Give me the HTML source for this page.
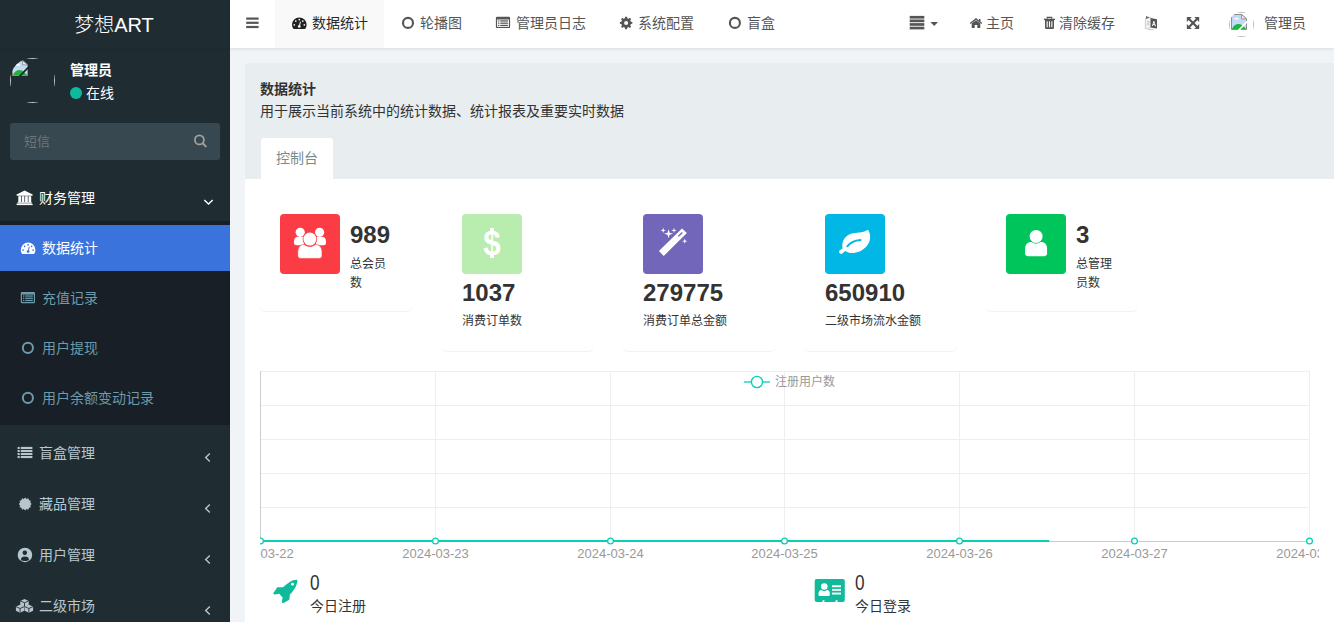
<!DOCTYPE html>
<html lang="zh-CN">
<head>
<meta charset="utf-8">
<title>梦想ART</title>
<style>
*{box-sizing:border-box;margin:0;padding:0}
html,body{width:1334px;height:622px;overflow:hidden}
body{font-family:"Liberation Sans","Noto Sans CJK SC",sans-serif;font-size:14px;color:#333;background:#f1f4f6;position:relative}
.abs{position:absolute;white-space:nowrap}
svg{display:block;position:absolute;overflow:visible;z-index:5;pointer-events:none}
/* ---------- sidebar ---------- */
#side{position:absolute;left:0;top:0;width:230px;height:622px;background:#1f2d33;overflow:hidden}
#logo{position:absolute;left:0;top:0;width:230px;height:50px;line-height:50px;padding-right:2px;text-align:center;color:#fff;font-size:20px;font-weight:300;border-bottom:1px solid #1c282d}
#avatar{position:absolute;left:10px;top:58px;width:45px;height:45px;border-radius:50%;overflow:hidden}
#avatar i,#navava i{position:absolute;left:0;top:0;right:0;bottom:0;border:1px solid #c4c4c4}
#navava{position:absolute;left:999px;top:12px;width:25px;height:25px;border-radius:50%;overflow:hidden}
#navava i{border-color:#bdbdbd}
#uname{left:70px;top:60px;color:#fff;font-weight:bold;font-size:14px;line-height:20px}
#ustat{left:86px;top:83px;color:#fff;font-size:14px;line-height:20px}
#udot{position:absolute;left:70px;top:87px;width:12px;height:12px;border-radius:50%;background:#0cbb9c}
#search{position:absolute;left:10px;top:123px;width:210px;height:37px;border-radius:3px;background:#374850}
#search span{position:absolute;left:14px;top:9px;font-size:13px;line-height:19px;color:#6b777c}
.m1{position:absolute;left:0;width:230px;height:51px;color:#b8c7ce;font-size:14px}
.m1 .t{position:absolute;left:39px;top:15px;line-height:20px}
.m1.open{color:#fff}
#tree{position:absolute;left:0;top:221px;width:230px;height:204px;background:#181f26}
.m2{position:absolute;left:0;width:230px;height:46px;color:#6c9bab;font-size:14px}
.m2 .t{position:absolute;left:42px;top:13px;line-height:20px}
.m2.act{background:#3b73dd;color:#fff}
/* ---------- header ---------- */
#nav{position:absolute;left:230px;top:0;width:1104px;height:48px;background:#fff;box-shadow:0 1px 3px rgba(0,0,0,.10)}
#tabact{position:absolute;left:45.4px;top:0;width:108.3px;height:48px;background:#f9f9f9}
.nt{top:13px;line-height:20px;font-size:14px;color:#555}
.nt.on{color:#2a2a2a}
/* ---------- content ---------- */
#panel{position:absolute;left:245px;top:63px;width:1100px;height:570px;background:#fff;border-radius:3px 0 0 0}
#phead{position:absolute;left:0;top:0;width:1100px;height:116px;background:#e8edf0;border-radius:3px 0 0 0}
#ptitle{left:15px;top:16px;font-weight:bold;font-size:14px;line-height:20px;color:#333}
#pdesc{left:15px;top:38px;font-size:14px;line-height:20px;color:#333}
#ptab{position:absolute;left:16px;top:75px;width:72px;height:41px;background:#fff;border-radius:3px 3px 0 0;color:#7b8a8b;font-size:14px;line-height:40px;text-align:center}
.card{position:absolute;width:150px;background:#fff;border-radius:5px;box-shadow:0 1px 0 rgba(0,0,0,.05)}
.ico{position:absolute;left:20px;top:20px;width:60px;height:60px;border-radius:4px}
.num{font-family:"Liberation Sans",sans-serif;font-weight:bold;font-size:24px;line-height:30px;color:#333}
.lab{font-size:12px;line-height:19px;color:#333}
#chart{overflow:hidden}
.bnum{font-size:21.5px;line-height:28px;color:#333;font-weight:300;transform:scaleX(.8);transform-origin:0 50%}
.blab{font-size:14px;line-height:20px;color:#333}
.usd{position:absolute;left:0;top:9.3px;width:60px;text-align:center;font-family:"Liberation Sans",sans-serif;font-weight:bold;font-size:34.7px;line-height:40px;color:#fff;transform:scaleX(.9);transform-origin:29.6px 50%}
.usdbox:before,.usdbox:after{content:"";position:absolute;left:27.7px;width:3.9px;height:4.2px;background:#fff}
.usdbox:before{top:14px}.usdbox:after{top:40.2px}
</style>
</head>
<body>

<!-- ================= SIDEBAR ================= -->
<div id="side">
<!-- icon layer: side -->
<svg width="230" height="622" viewBox="0 0 230 622" style="left:0;top:0">
<!-- search -->
<circle cx="199.4" cy="139.9" r="4.5" fill="none" stroke="#a3a19d" stroke-width="1.8"/><line x1="202.9" y1="143.4" x2="205.7" y2="146.4" stroke="#a3a19d" stroke-width="2" stroke-linecap="round"/>
<!-- bank -->
<g fill="#fff"><path d="M24.6,190.6 L32.6,194.4 V195.8 H16.6 V194.4Z"/>
<rect x="18.3" y="196.2" width="2.7" height="5.9"/><rect x="21.7" y="196.2" width="2.7" height="5.9"/><rect x="25.1" y="196.2" width="2.7" height="5.9"/><rect x="28.5" y="196.2" width="2.7" height="5.9"/>
<rect x="17.5" y="202.2" width="14.2" height="1.4"/><rect x="16.6" y="203.7" width="16" height="1.4"/></g>
<polyline points="204.3,200 208.5,204 212.7,200" fill="none" stroke="#fff" stroke-width="1.4"/>
<!-- level2 icons -->
<g transform="translate(0,0)">
<path fill="#fff" d="M20.8,249.9 A7.3,7.3 0 0 1 35.4,249.9 C35.4,251.4 35,252.7 34.3,253.7 Q34.05,254.1 33.6,254.1 L22.6,254.1 Q22.15,254.1 21.9,253.7 C21.2,252.7 20.8,251.4 20.8,249.9Z"/>
<g fill="#3b73dd"><circle cx="23.1" cy="250" r=".85"/><circle cx="24.6" cy="246.3" r=".85"/><circle cx="28.1" cy="244.8" r=".85"/><circle cx="31.6" cy="246.3" r=".85"/><circle cx="33.1" cy="250" r=".85"/><circle cx="28.1" cy="251.6" r="1.35"/></g>
<line x1="28.1" y1="251.6" x2="29.2" y2="247.2" stroke="#3b73dd" stroke-width="1" stroke-linecap="round"/></g>
<g transform="translate(0,0)">
<rect x="20.8" y="291.9" width="14.2" height="11.3" rx="1.2" fill="#6c9bab"/>
<rect x="22" y="294.6" width="11.8" height="7.4" fill="#181f26"/>
<g fill="#6c9bab"><rect x="25.2" y="295.4" width="7.6" height="1.25"/><rect x="25.2" y="297.65" width="7.6" height="1.25"/><rect x="25.2" y="299.9" width="7.6" height="1.25"/>
<rect x="23" y="295.4" width="1.3" height="1.25"/><rect x="23" y="297.65" width="1.3" height="1.25"/><rect x="23" y="299.9" width="1.3" height="1.25"/></g></g>
<circle cx="27.9" cy="347.9" r="5.05" fill="none" stroke="#6c9bab" stroke-width="2"/>
<circle cx="27.9" cy="397.9" r="5.05" fill="none" stroke="#6c9bab" stroke-width="2"/>
<!-- list -->
<g fill="#b8c7ce"><rect x="17.6" y="446.90" width="2.1" height="2.1"/><rect x="20.7" y="446.90" width="11.7" height="2.1"/><rect x="17.6" y="449.93" width="2.1" height="2.1"/><rect x="20.7" y="449.93" width="11.7" height="2.1"/><rect x="17.6" y="452.96" width="2.1" height="2.1"/><rect x="20.7" y="452.96" width="11.7" height="2.1"/><rect x="17.6" y="455.99" width="2.1" height="2.1"/><rect x="20.7" y="455.99" width="11.7" height="2.1"/></g>
<!-- certificate -->
<polygon points="25.20,497.50 26.57,498.88 28.45,498.37 28.95,500.25 30.83,500.75 30.32,502.63 31.70,504.00 30.32,505.37 30.83,507.25 28.95,507.75 28.45,509.63 26.57,509.12 25.20,510.50 23.83,509.12 21.95,509.63 21.45,507.75 19.57,507.25 20.08,505.37 18.70,504.00 20.08,502.63 19.57,500.75 21.45,500.25 21.95,498.37 23.83,498.88" fill="#b8c7ce"/>
<!-- user-circle -->
<circle cx="24.95" cy="554.9" r="7.25" fill="#b8c7ce"/>
<circle cx="24.8" cy="552.8" r="2.25" fill="#1f2d33"/>
<path d="M21,559.9 C21,557.5 22.5,556.6 24.9,556.6 C27.3,556.6 28.9,557.5 28.9,559.9 C27.8,560.7 26.4,561 24.9,561 C23.4,561 22,560.7 21,559.9Z" fill="#1f2d33"/>
<!-- cubes -->
<g transform="translate(24.5,602.9)"><polygon points="0,-3.9 4.2,-2 4.2,2.2 0,4.1 -4.2,2.2 -4.2,-2" fill="#b8c7ce"/><path d="M-4.2,-2 L0,-0.1 L4.2,-2 M0,-0.1 V4.1" fill="none" stroke="#1f2d33" stroke-width=".9"/></g><g transform="translate(20.1,608.6)"><polygon points="0,-3.9 4.2,-2 4.2,2.2 0,4.1 -4.2,2.2 -4.2,-2" fill="#b8c7ce"/><path d="M-4.2,-2 L0,-0.1 L4.2,-2 M0,-0.1 V4.1" fill="none" stroke="#1f2d33" stroke-width=".9"/></g><g transform="translate(28.9,608.6)"><polygon points="0,-3.9 4.2,-2 4.2,2.2 0,4.1 -4.2,2.2 -4.2,-2" fill="#b8c7ce"/><path d="M-4.2,-2 L0,-0.1 L4.2,-2 M0,-0.1 V4.1" fill="none" stroke="#1f2d33" stroke-width=".9"/></g>
<!-- chevrons -->
<polyline points="209.8,453.6 205.7,457.5 209.8,461.4" fill="none" stroke="#b8c7ce" stroke-width="1.4"/><polyline points="209.8,504.6 205.7,508.5 209.8,512.4" fill="none" stroke="#b8c7ce" stroke-width="1.4"/><polyline points="209.8,555.6 205.7,559.5 209.8,563.4" fill="none" stroke="#b8c7ce" stroke-width="1.4"/><polyline points="209.8,606.6 205.7,610.5 209.8,614.4" fill="none" stroke="#b8c7ce" stroke-width="1.4"/>
</svg>
  <div id="logo">梦想ART</div>
  <div id="avatar"><i></i><svg width="16" height="16" viewBox="0 0 16 16" style="left:2px;top:2px"><g transform="translate(0,0)">
<path d="M0.5,0.5 H10.6 L15.5,4.9 V15.5 H0.5Z" fill="#c6dbf6" stroke="#8c8c8c" stroke-width="1"/>
<path d="M1,1 H10 V6 H15 V9 H1Z" fill="#bfd6f5" opacity=".6"/>
<path d="M10.6,0.5 V4.9 H15.5Z" fill="#f4f4f4" stroke="#8c8c8c" stroke-width=".9" stroke-linejoin="round"/>
<path d="M2.9,5.4 C2.9,4.4 4,4.1 4.6,4.4 C5,3.2 6.9,3.2 7.3,4.4 C8,4.3 8.5,4.8 8.3,5.4Z" fill="#fff"/>
<path d="M1,15 C2.4,11.2 5,9.7 8,9.9 C10.8,10.1 13,12.4 15,15Z" fill="#1db53a"/>
<line x1="16.3" y1="7.4" x2="7.6" y2="16.3" stroke="#1b262b" stroke-width="1.7"/>
</g></svg></div>
  <div id="uname" class="abs">管理员</div>
  <div id="udot"></div>
  <div id="ustat" class="abs">在线</div>
  <div id="search"><span>短信</span></div>

  <div class="m1 open" style="top:173px"><span class="t">财务管理</span></div>
  <div id="tree">
    <div class="m2 act" style="top:4px"><span class="t">数据统计</span></div>
    <div class="m2" style="top:54px"><span class="t">充值记录</span></div>
    <div class="m2" style="top:104px"><span class="t">用户提现</span></div>
    <div class="m2" style="top:154px"><span class="t">用户余额变动记录</span></div>
  </div>
  <div class="m1" style="top:428px"><span class="t">盲盒管理</span></div>
  <div class="m1" style="top:479px"><span class="t">藏品管理</span></div>
  <div class="m1" style="top:530px"><span class="t">用户管理</span></div>
  <div class="m1" style="top:581px"><span class="t">二级市场</span></div>
</div>

<!-- ================= HEADER ================= -->
<div id="nav">
  <div id="tabact"></div>
<!-- icon layer: nav -->
<svg width="1104" height="48" viewBox="230 0 1104 48" style="left:0;top:0">
<g fill="#555"><rect x="246.2" y="17.5" width="12.4" height="2.2"/><rect x="246.2" y="21.7" width="12.4" height="2.2"/><rect x="246.2" y="25.9" width="12.4" height="2.2"/></g>
<g transform="translate(271.2,-225.2)">
<path fill="#222" d="M20.8,249.9 A7.3,7.3 0 0 1 35.4,249.9 C35.4,251.4 35,252.7 34.3,253.7 Q34.05,254.1 33.6,254.1 L22.6,254.1 Q22.15,254.1 21.9,253.7 C21.2,252.7 20.8,251.4 20.8,249.9Z"/>
<g fill="#f9f9f9"><circle cx="23.1" cy="250" r=".85"/><circle cx="24.6" cy="246.3" r=".85"/><circle cx="28.1" cy="244.8" r=".85"/><circle cx="31.6" cy="246.3" r=".85"/><circle cx="33.1" cy="250" r=".85"/><circle cx="28.1" cy="251.6" r="1.35"/></g>
<line x1="28.1" y1="251.6" x2="29.2" y2="247.2" stroke="#f9f9f9" stroke-width="1" stroke-linecap="round"/></g>
<circle cx="408" cy="22.9" r="5" fill="none" stroke="#555" stroke-width="2.1"/>
<g transform="translate(475.1,-275.1)">
<rect x="20.8" y="291.9" width="14.2" height="11.3" rx="1.2" fill="#555"/>
<rect x="22" y="294.6" width="11.8" height="7.4" fill="#fff"/>
<g fill="#555"><rect x="25.2" y="295.4" width="7.6" height="1.25"/><rect x="25.2" y="297.65" width="7.6" height="1.25"/><rect x="25.2" y="299.9" width="7.6" height="1.25"/>
<rect x="23" y="295.4" width="1.3" height="1.25"/><rect x="23" y="297.65" width="1.3" height="1.25"/><rect x="23" y="299.9" width="1.3" height="1.25"/></g></g>
<path fill="#555" fill-rule="evenodd" d="M624.96,18.14 L625.16,16.67 L627.04,16.67 L627.24,18.14 L628.66,18.72 L629.84,17.83 L631.17,19.16 L630.28,20.34 L630.86,21.76 L632.33,21.96 L632.33,23.84 L630.86,24.04 L630.28,25.46 L631.17,26.64 L629.84,27.97 L628.66,27.08 L627.24,27.66 L627.04,29.13 L625.16,29.13 L624.96,27.66 L623.54,27.08 L622.36,27.97 L621.03,26.64 L621.92,25.46 L621.34,24.04 L619.87,23.84 L619.87,21.96 L621.34,21.76 L621.92,20.34 L621.03,19.16 L622.36,17.83 L623.54,18.72Z M624.10,22.90 a2.00,2.00 0 1 0 4.00,0 a2.00,2.00 0 1 0 -4.00,0Z"/>
<circle cx="734.9" cy="22.9" r="5" fill="none" stroke="#555" stroke-width="2.1"/>
<g fill="#555"><rect x="909.7" y="15.9" width="14.6" height="2.7"/><rect x="909.7" y="19.5" width="14.6" height="2.7"/><rect x="909.7" y="23.1" width="14.6" height="2.7"/><rect x="909.7" y="26.7" width="14.6" height="2.7"/>
<polygon points="930.4,22 938,22 934.2,26"/></g>
<!-- home -->
<g fill="#555"><polygon points="971.7,23.6 976,20.3 980.3,23.6 980.3,28 977.3,28 977.3,25 974.7,25 974.7,28 971.7,28"/><rect x="979" y="19" width="1.5" height="2.8"/></g>
<polyline points="970.2,23.5 976,18.9 981.8,23.5" fill="none" stroke="#555" stroke-width="1.3"/>
<!-- trash -->
<g fill="#555"><rect x="1043.9" y="18.7" width="11.1" height="1.4"/><path d="M1045,20 H1054 V27.7 Q1054,29 1052.7,29 H1046.3 Q1045,29 1045,27.7Z"/></g>
<path d="M1047.2,18.8 V17.4 H1051.7 V18.8" fill="none" stroke="#555" stroke-width="1.1"/>
<g fill="#fff"><rect x="1046.6" y="21.3" width="1.1" height="6"/><rect x="1048.95" y="21.3" width="1.1" height="6"/><rect x="1051.3" y="21.3" width="1.1" height="6"/></g>
<!-- language -->
<path d="M1145.4,18.6 L1150.8,17.2 V27.6 L1145.4,28.8Z" fill="#f6f6fa" stroke="#b9b9c6" stroke-width=".7"/>
<path d="M1146,16 L1149.6,17.4 L1146,18.9Z" fill="#666"/>
<path d="M1150.6,17.9 L1157,19.2 V28.4 L1150.6,27.4Z" fill="#555"/>
<path d="M1152.4,26 L1153.9,21.2 L1155.5,26.4 M1152.9,24.6 H1155" fill="none" stroke="#fff" stroke-width=".9"/>
<path d="M1146.6,21.6 H1149.6 M1148.1,20.6 V21.6 M1149.2,21.8 C1148.9,23.6 1147.8,24.8 1146.6,25.4 M1147,22.8 C1147.6,24 1148.5,25 1149.6,25.4" fill="none" stroke="#c9b9a6" stroke-width=".7"/>
<path d="M1148,29.6 H1152.5 L1154,28.6" fill="none" stroke="#bbb" stroke-width=".8"/>
<!-- fullscreen -->
<g stroke="#555" stroke-width="2.1"><line x1="1189" y1="19" x2="1197" y2="27"/><line x1="1197" y1="19" x2="1189" y2="27"/></g>
<g fill="#555"><polygon points="1186.8,17 1191.8,17 1186.8,22"/><polygon points="1199.2,17 1194.2,17 1199.2,22"/><polygon points="1186.8,28.9 1191.8,28.9 1186.8,23.9"/><polygon points="1199.2,28.9 1194.2,28.9 1199.2,23.9"/></g>
</svg>
  <div id="navava"><i></i><svg width="16" height="16" viewBox="0 0 16 16" style="left:2px;top:2px"><g transform="translate(0,0)">
<path d="M0.5,0.5 H10.6 L15.5,4.9 V15.5 H0.5Z" fill="#c6dbf6" stroke="#8c8c8c" stroke-width="1"/>
<path d="M1,1 H10 V6 H15 V9 H1Z" fill="#bfd6f5" opacity=".6"/>
<path d="M10.6,0.5 V4.9 H15.5Z" fill="#f4f4f4" stroke="#8c8c8c" stroke-width=".9" stroke-linejoin="round"/>
<path d="M2.9,5.4 C2.9,4.4 4,4.1 4.6,4.4 C5,3.2 6.9,3.2 7.3,4.4 C8,4.3 8.5,4.8 8.3,5.4Z" fill="#fff"/>
<path d="M1,15 C2.4,11.2 5,9.7 8,9.9 C10.8,10.1 13,12.4 15,15Z" fill="#1db53a"/>
<line x1="16.3" y1="7.4" x2="7.6" y2="16.3" stroke="#fff" stroke-width="1.7"/>
</g></svg></div>
  <div class="abs nt on" style="left:82px">数据统计</div>
  <div class="abs nt" style="left:190px">轮播图</div>
  <div class="abs nt" style="left:286px">管理员日志</div>
  <div class="abs nt" style="left:408px">系统配置</div>
  <div class="abs nt" style="left:517px">盲盒</div>
  <div class="abs nt" style="left:756px">主页</div>
  <div class="abs nt" style="left:829px">清除缓存</div>
  <div class="abs nt" style="left:1034px">管理员</div>
</div>

<!-- ================= CONTENT ================= -->
<div id="panel">
  <div id="phead">
    <div id="ptitle" class="abs">数据统计</div>
    <div id="pdesc" class="abs">用于展示当前系统中的统计数据、统计报表及重要实时数据</div>
    <div id="ptab">控制台</div>
  </div>

  <!-- stat cards (coordinates relative to #panel at 245,63) -->
  <div class="card" style="left:15px;top:131px;width:151.5px;height:117px">
    <div class="ico" style="background:#fb3c44"></div>
    <div class="abs num" style="left:90px;top:25.6px">989</div>
    <div class="abs lab" style="left:90px;top:61px">总会员<br>数</div>
  </div>
  <div class="card" style="left:197px;top:131px;width:151.5px;height:157px">
    <div class="ico usdbox" style="background:#b9edb0"><span class="usd">$</span></div>
    <div class="abs num" style="left:20px;top:84.4px">1037</div>
    <div class="abs lab" style="left:20px;top:118px">消费订单数</div>
  </div>
  <div class="card" style="left:378px;top:131px;width:151.5px;height:157px">
    <div class="ico" style="background:#7266ba"></div>
    <div class="abs num" style="left:20px;top:84.4px">279775</div>
    <div class="abs lab" style="left:20px;top:118px">消费订单总金额</div>
  </div>
  <div class="card" style="left:560px;top:131px;width:151.5px;height:157px">
    <div class="ico" style="background:#00b7e5"></div>
    <div class="abs num" style="left:20px;top:84.4px">650910</div>
    <div class="abs lab" style="left:20px;top:118px">二级市场流水金额</div>
  </div>
  <div class="card" style="left:741px;top:131px;width:151.5px;height:117px">
    <div class="ico" style="background:#00c55b"></div>
    <div class="abs num" style="left:90px;top:25.6px">3</div>
    <div class="abs lab" style="left:90px;top:61px">总管理<br>员数</div>
  </div>

  <!-- chart -->
  <svg id="chart" style="left:15px;top:299px" width="1059" height="205" viewBox="0 0 1059 205">
    <g stroke="#eeeeee" stroke-width="1" shape-rendering="crispEdges">
      <line x1="0" y1="9.5" x2="1050" y2="9.5"/>
      <line x1="0" y1="43.5" x2="1050" y2="43.5"/>
      <line x1="0" y1="77.5" x2="1050" y2="77.5"/>
      <line x1="0" y1="111.5" x2="1050" y2="111.5"/>
      <line x1="0" y1="145.5" x2="1050" y2="145.5"/>
      <line x1="175.5" y1="9" x2="175.5" y2="179"/>
      <line x1="350.5" y1="9" x2="350.5" y2="179"/>
      <line x1="524.5" y1="9" x2="524.5" y2="179"/>
      <line x1="699.5" y1="9" x2="699.5" y2="179"/>
      <line x1="874.5" y1="9" x2="874.5" y2="179"/>
      <line x1="1049.5" y1="9" x2="1049.5" y2="179"/>
    </g>
    <g stroke="#cccccc" stroke-width="1" shape-rendering="crispEdges"><line x1="0.5" y1="9" x2="0.5" y2="180"/><line x1="0" y1="179.5" x2="1050" y2="179.5"/></g>
    <line x1="0" y1="179" x2="789.2" y2="179" stroke="#0bcfb5" stroke-width="2.2"/>
    <g fill="#fff" stroke="#0bcfb5" stroke-width="1.3"><circle cx="0.5" cy="179" r="2.9"/><circle cx="175.5" cy="179" r="2.9"/><circle cx="350.5" cy="179" r="2.9"/><circle cx="524.5" cy="179" r="2.9"/><circle cx="699.5" cy="179" r="2.9"/><circle cx="874.5" cy="179" r="2.9"/><circle cx="1049.5" cy="179" r="2.9"/></g>
    <g font-family="Liberation Sans, Noto Sans CJK SC, sans-serif" font-size="12" fill="#999999">
      <text x="-32.7" y="196" textLength="66.4" lengthAdjust="spacingAndGlyphs">2024-03-22</text>
      <text x="142.3" y="196" textLength="66.4" lengthAdjust="spacingAndGlyphs">2024-03-23</text>
      <text x="317.3" y="196" textLength="66.4" lengthAdjust="spacingAndGlyphs">2024-03-24</text>
      <text x="491.3" y="196" textLength="66.4" lengthAdjust="spacingAndGlyphs">2024-03-25</text>
      <text x="666.3" y="196" textLength="66.4" lengthAdjust="spacingAndGlyphs">2024-03-26</text>
      <text x="841.3" y="196" textLength="66.4" lengthAdjust="spacingAndGlyphs">2024-03-27</text>
      <text x="1016.3" y="196" textLength="66.4" lengthAdjust="spacingAndGlyphs">2024-03-28</text>
    </g>
    <line x1="484" y1="20" x2="510" y2="20" stroke="#0bcfb5" stroke-width="1.3"/>
    <circle cx="497" cy="20" r="5.6" fill="#fff" stroke="#0bcfb5" stroke-width="1.4"/>
    <text x="515" y="24.3" font-family="Liberation Sans, Noto Sans CJK SC, sans-serif" font-size="12" fill="#999999">注册用户数</text>
  </svg>

<!-- icon layer: panel -->
<svg width="1089" height="559" viewBox="245 63 1089 559" style="left:0;top:0">
<!-- users -->
<g transform="translate(280,214)" fill="#fff">
<circle cx="20.2" cy="18.3" r="4.6"/><circle cx="39.6" cy="18.3" r="4.6"/>
<path d="M14,27.5 C14,24.2 15.5,22.7 18,22.7 H22 C23,22.7 23.5,23 24,23.5 V31.3 H16.5 C15,31.3 14,30.3 14,29Z"/>
<path d="M46,27.5 C46,24.2 44.500,22.7 42,22.7 H38 C37,22.7 36.500,23 36,23.5 V31.3 H43.5 C45,31.3 46,30.3 46,29Z"/>
<circle cx="29.9" cy="25.1" r="7.3" fill="#fb3c44"/><circle cx="29.9" cy="25.1" r="6.5"/>
<path d="M17.8,38 C17.8,33 20.5,30.4 24.5,30.4 C26,31.8 27.8,32.5 29.9,32.5 C32,32.500 33.8,31.8 35.300,30.4 C39.300,30.4 42,33 42,38 V41.4 C42,43.200 40.800,44.400 39,44.400 H20.800 C19,44.400 17.800,43.200 17.800,41.400Z" stroke="#fb3c44" stroke-width=".6"/>
</g>
<!-- magic -->
<g transform="translate(643,214)" fill="#fff">
<polygon points="15.9,37.1 39,14.4 43.900,19.100 20.700,41.900"/>
<line x1="35.400" y1="22.3" x2="39.4" y2="18.4" stroke="#7266ba" stroke-width="1.4"/>
<polygon points="25.60,15.30 26.63,18.77 30.10,19.80 26.63,20.83 25.60,24.30 24.57,20.83 21.10,19.80 24.57,18.77"/><polygon points="20.20,13.80 20.84,15.76 22.80,16.40 20.84,17.04 20.20,19.00 19.56,17.04 17.60,16.40 19.56,15.76"/><polygon points="31.00,13.70 31.64,15.76 33.70,16.40 31.64,17.04 31.00,19.10 30.36,17.04 28.30,16.40 30.36,15.76"/><polygon points="41.70,24.60 42.34,26.56 44.30,27.20 42.34,27.84 41.70,29.80 41.06,27.84 39.10,27.20 41.06,26.56"/>
</g>
<!-- leaf -->
<g transform="translate(825,214)">
<path fill="#fff" d="M17.3,32.5 C17,26.5 20.500,21.600 26,19.800 C31.500,18.100 37,19.500 42.900,15.800 C44.600,18 45.400,21 45.100,24.200 C44.500,31.200 38.200,37.200 30,38.800 C26,39.600 22.800,38.700 20.300,37 L17.600,39.300 C16.600,40.200 15.200,40 14.500,39.100 C13.800,38.200 14,37 14.900,36.300 L17.700,34.300 C17.400,33.700 17.300,33.100 17.300,32.500Z"/>
<path d="M22.300,32.300 C25.300,28.700 29.300,26.500 35.400,26" fill="none" stroke="#00b7e5" stroke-width="2" stroke-linecap="round"/>
</g>
<!-- user -->
<g transform="translate(1006,214)" fill="#fff">
<path d="M19.100,35 C19.100,30.500 21.500,28 25,28 H35.200 C38.700,28 41.100,30.500 41.100,35 V39.300 C41.100,41 39.900,42.200 38.200,42.200 H22 C20.300,42.200 19.100,41 19.100,39.300Z"/>
<circle cx="30.100" cy="22.400" r="7.300" fill="#00c55b"/><circle cx="30.100" cy="22.400" r="6.500"/>
</g>
<!-- rocket -->
<g transform="translate(270,576) scale(0.04826)" fill="#0fbb9b">
<path d="M565,80 C520,76 460,90 410,123 C360,156 310,196 268,235 L152,235 L68,356 Q74,386 100,385 L196,366 C215,395 235,420 262,445 L243,540 Q254,563 280,557 L400,492 L412,382 C460,335 510,270 540,205 C560,160 568,115 565,80Z"/>
<ellipse cx="466" cy="170" rx="31" ry="29" fill="#fff"/>
</g>
<!-- vcard -->
<g fill="#0fbb9b"><path d="M816.700,579 H842.800 Q844.800,579 844.800,581 V600 Q844.800,602 842.800,602 H837.500 V600.300 H835.600 V602 H824.400 V600.300 H822.500 V602 H816.700 Q814.700,602 814.700,600 V581 Q814.700,579 816.700,579Z"/></g>
<g fill="#fff"><circle cx="824.300" cy="586.500" r="3.300"/><path d="M818.500,593.500 C818.500,591.300 819.800,590.100 821.500,590.100 C822.300,590.800 823.200,591.200 824.300,591.200 C825.400,591.200 826.300,590.800 827.100,590.100 C828.800,590.100 829.800,591.300 829.800,593.500 V594.800 Q829.800,596.100 828.500,596.100 H819.800 Q818.500,596.100 818.500,594.800Z"/>
<rect x="832" y="585.300" width="9" height="1.900"/><rect x="832" y="588.900" width="9" height="1.900"/><rect x="832" y="592.600" width="9" height="1.900"/></g>
</svg>
  <!-- bottom stats -->
  <div class="abs bnum" style="left:65.3px;top:506.1px">0</div>
  <div class="abs blab" style="left:65px;top:533px">今日注册</div>
  <div class="abs bnum" style="left:609.8px;top:506.1px">0</div>
  <div class="abs blab" style="left:610px;top:533px">今日登录</div>
</div>

</body>
</html>
